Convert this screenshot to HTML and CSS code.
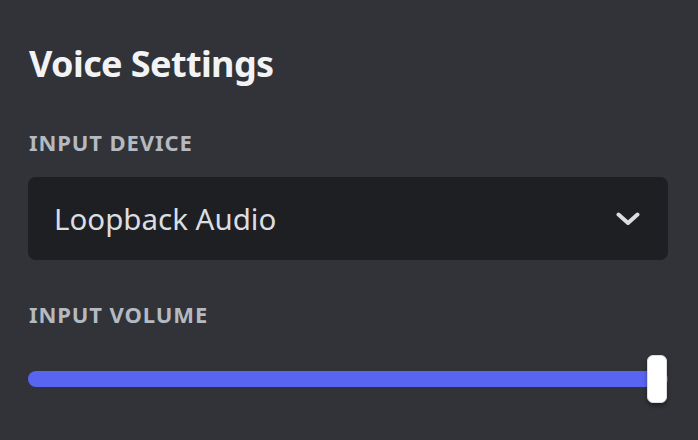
FILE: index.html
```html
<!DOCTYPE html>
<html>
<head>
<meta charset="utf-8">
<link rel="stylesheet" href="styles.css">
</head>
<body>
<main class="panel">
  <h1 class="title">Voice Settings</h1>
  <section class="field">
    <div class="label">INPUT DEVICE</div>
    <div class="select">
      <span class="select-value">Loopback Audio</span>
      <svg class="chevron" width="24" height="14" viewBox="0 0 24 14"><path d="M2.5 2.5 L12 11 L21.5 2.5" fill="none" stroke="#dbdee1" stroke-width="4" stroke-linecap="round" stroke-linejoin="round"/></svg>
    </div>
  </section>
  <section class="field volume">
    <div class="label">INPUT VOLUME</div>
    <div class="slider">
      <div class="track"></div>
      <div class="knob"></div>
    </div>
  </section>
</main>
</body>
</html>
```
FILE: styles.css
```css
html, body {
  margin: 0;
  padding: 0;
  background: #313338;
  width: 698px;
  height: 440px;
  overflow: hidden;
}
.panel {
  padding: 36px 30px 0 28px;
  font-family: "Noto Sans", "Open Sans", sans-serif;
}
.title {
  margin: 0 0 0 1px;
  font-size: 36px;
  font-weight: 700;
  line-height: 56px;
  color: #f2f3f5;
  letter-spacing: -0.6px;
}
.field {
  margin-top: 35px;
}
.label {
  margin-left: 1px;
  font-size: 22px;
  font-weight: 700;
  line-height: 30px;
  color: #b5bac1;
  letter-spacing: 0.9px;
}
.select {
  margin-top: 20px;
  height: 83px;
  box-sizing: border-box;
  background: #1e1f22;
  border-radius: 8px;
  display: flex;
  align-items: center;
  justify-content: space-between;
  padding: 0 28px 0 26px;
}
.select-value {
  font-size: 29.5px;
  color: #dbdee1;
  font-weight: 400;
}
.chevron {
  display: block;
}
.volume {
  margin-top: 39px;
}
.slider {
  position: relative;
  margin-top: 26px;
  height: 48px;
  display: flex;
  align-items: center;
}
.track {
  flex: 1;
  height: 16px;
  border-radius: 8px;
  background: #5865f2;
}
.knob {
  position: absolute;
  right: 1px;
  top: 0;
  width: 20px;
  height: 48px;
  box-sizing: border-box;
  background: #ffffff;
  border: 1px solid #dcdde0;
  border-radius: 6px;
  box-shadow: 0 3px 4px rgba(0, 0, 0, 0.35);
}
```
